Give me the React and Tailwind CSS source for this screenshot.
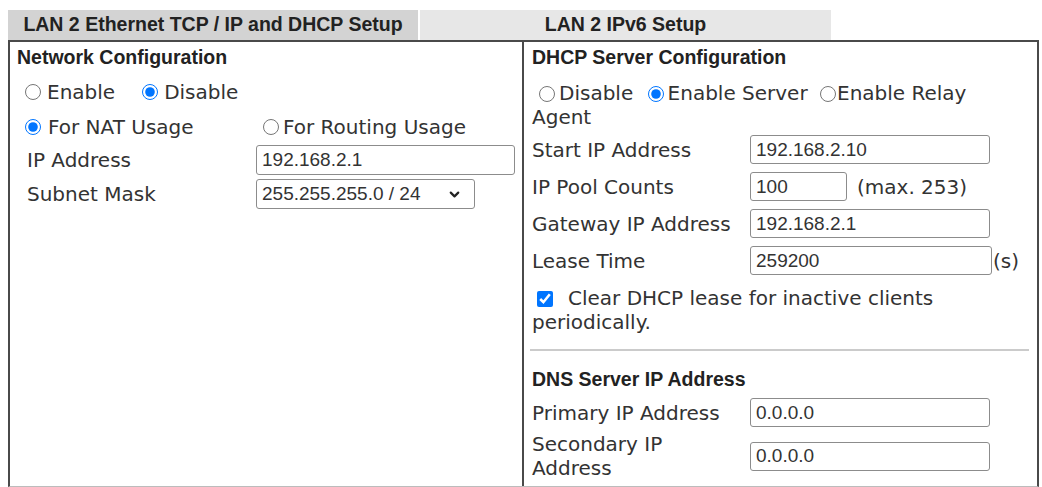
import React from "react";
import { ChevronDown } from "lucide-react";

const Radio = ({ checked, className = "" }) => (
  <input
    type="radio"
    readOnly
    checked={!!checked}
    className={"w-[16px] h-[16px] shrink-0 " + className}
  />
);

const TextBox = ({ value, className = "" }) => (
  <input
    type="text"
    readOnly
    value={value}
    className={
      "h-[29px] border border-[#8c8c8c] rounded-[3px] bg-white pl-[5px] font-['Liberation_Sans',Arial,sans-serif] text-[19px] text-[#333] outline-none " +
      className
    }
  />
);

const FieldRow = ({ label, children, className = "" }) => (
  <div className={"flex items-center pl-[8px] " + className}>
    <div className="w-[218px] shrink-0">{label}</div>
    {children}
  </div>
);

export default function App() {
  return (
    <div className="w-[1042px] h-[487px] overflow-hidden bg-white pt-[10px] pl-[8px] font-['DejaVu_Sans',Verdana,sans-serif] text-[20px] text-[#333]">
      {/* tabs */}
      <div className="flex gap-[2px] h-[30px] font-['Liberation_Sans',Arial,sans-serif] font-bold text-[19.5px] text-[#222]">
        <div className="w-[410px] bg-[#d3d3d3] flex items-center justify-center">
          LAN 2 Ethernet TCP / IP and DHCP Setup
        </div>
        <div className="w-[411px] bg-[#e7e7e7] flex items-center justify-center">
          LAN 2 IPv6 Setup
        </div>
      </div>

      <div className="flex w-[1031px] h-[447px] border-t-2 border-x-2 border-b border-[#4a4a4a] border-b-[#bcbcbc]">
        {/* left column */}
        <div className="w-[514px] shrink-0 border-r-2 border-[#4a4a4a]">
          <div className="h-[31px] pl-[7px] flex items-center font-['Liberation_Sans',Arial,sans-serif] font-bold text-[19.5px] text-[#222]">
            Network Configuration
          </div>
          <div className="h-[38px] flex items-center pl-[15px]">
            <Radio />
            <span className="ml-[6px]">Enable</span>
            <Radio checked className="ml-[27px]" />
            <span className="ml-[6px]">Disable</span>
          </div>
          <div className="h-[32px] flex items-center pl-[15px]">
            <div className="w-[238px] flex items-center">
              <Radio checked />
              <span className="ml-[7px]">For NAT Usage</span>
            </div>
            <Radio />
            <span className="ml-[4px]">For Routing Usage</span>
          </div>
          <div className="h-[33px] flex items-center pl-[17px]">
            <div className="w-[229px] shrink-0">IP Address</div>
            <TextBox value="192.168.2.1" className="w-[259px] h-[30px]" />
          </div>
          <div className="h-[36px] flex items-center pl-[17px]">
            <div className="w-[229px] shrink-0">Subnet Mask</div>
            <div className="w-[219px] h-[30px] border border-[#8c8c8c] rounded-[3px] flex items-center justify-between pl-[5px] pr-[12px] font-['Liberation_Sans',Arial,sans-serif] text-[19px] text-[#333]">
              <span>255.255.255.0 / 24</span>
              <ChevronDown size={15} strokeWidth={3.5} className="text-[#222]" />
            </div>
          </div>
        </div>

        {/* right column */}
        <div className="flex-1 min-w-0">
          <div className="h-[31px] pl-[8px] flex items-center font-['Liberation_Sans',Arial,sans-serif] font-bold text-[19.5px] text-[#222]">
            DHCP Server Configuration
          </div>
          <p className="pt-[8px] pl-[8px] pr-[8px] leading-[24px]">
            <Radio className="ml-[7px] mr-[4px] align-[-2px]" />
            Disable{" "}
            <Radio checked className="ml-[8px] mr-[4px] align-[-2px]" />
            Enable Server{" "}
            <Radio className="ml-[6px] mr-[1px] align-[-2px]" />
            Enable Relay
            <br />
            Agent
          </p>
          <div className="mt-[2px]">
            <FieldRow label="Start IP Address" className="h-[37px]">
              <TextBox value="192.168.2.10" className="w-[240px] h-[28px]" />
            </FieldRow>
            <FieldRow label="IP Pool Counts" className="h-[37px]">
              <TextBox value="100" className="w-[97px] h-[28px]" />
              <span className="ml-[10px]">(max. 253)</span>
            </FieldRow>
            <FieldRow label="Gateway IP Address" className="h-[37px]">
              <TextBox value="192.168.2.1" className="w-[240px] h-[29px]" />
            </FieldRow>
            <FieldRow label="Lease Time" className="h-[37px]">
              <TextBox value="259200" className="w-[242px] h-[29px]" />
              <span className="ml-[1px]">(s)</span>
            </FieldRow>
          </div>
          <p className="pt-[7px] pl-[8px] pr-[8px] leading-[24px]">
            <input
              type="checkbox"
              readOnly
              checked
              className="w-[16px] h-[16px] ml-[5px] mr-[15px] align-[-2px]"
            />
            Clear DHCP lease for inactive clients
            <br />
            periodically.
          </p>
          <div className="mt-[15px] ml-[6px] mr-[8px] h-[2px] bg-[#cbcbcb]" />
          <div className="mt-[14px] h-[30px] pl-[8px] flex items-center font-['Liberation_Sans',Arial,sans-serif] font-bold text-[19.5px] text-[#222]">
            DNS Server IP Address
          </div>
          <FieldRow label="Primary IP Address" className="h-[35px]">
            <TextBox value="0.0.0.0" className="w-[240px] h-[29px]" />
          </FieldRow>
          <FieldRow
            label={
              <span className="block leading-[24px]">
                Secondary IP
                <br />
                Address
              </span>
            }
            className="h-[52px]"
          >
            <TextBox value="0.0.0.0" className="w-[240px] h-[29px]" />
          </FieldRow>
        </div>
      </div>
    </div>
  );
}
